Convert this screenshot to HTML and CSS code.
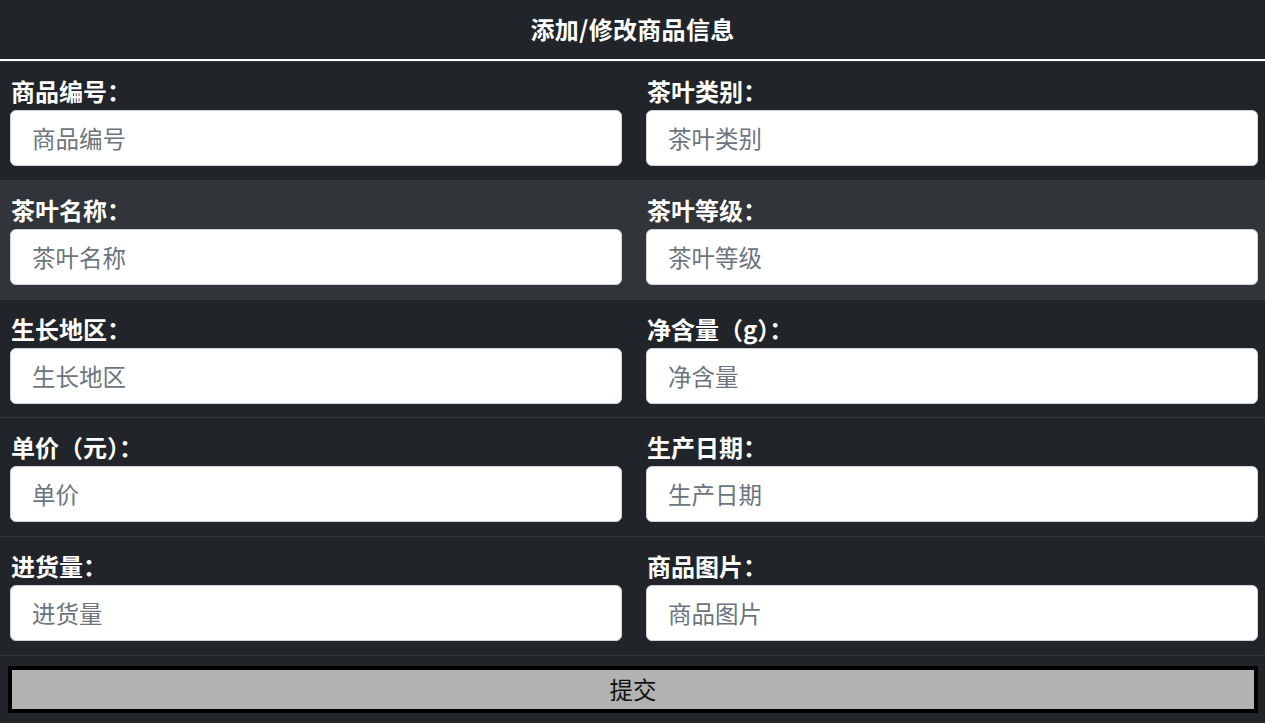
FILE: index.html
```html
<!DOCTYPE html>
<html lang="zh-CN">
<head>
<meta charset="utf-8">
<title>添加/修改商品信息</title>
<link rel="stylesheet" href="styles.css">
</head>
<body>
<div class="panel">
  <div class="panel-head">添加/修改商品信息</div>
  <div class="row">
    <div class="field"><label class="label">商品编号：</label><input class="input" type="text" placeholder="商品编号"></div>
    <div class="field"><label class="label">茶叶类别：</label><input class="input" type="text" placeholder="茶叶类别"></div>
  </div>
  <div class="row row-alt">
    <div class="field"><label class="label">茶叶名称：</label><input class="input" type="text" placeholder="茶叶名称"></div>
    <div class="field"><label class="label">茶叶等级：</label><input class="input" type="text" placeholder="茶叶等级"></div>
  </div>
  <div class="row">
    <div class="field"><label class="label">生长地区：</label><input class="input" type="text" placeholder="生长地区"></div>
    <div class="field"><label class="label">净含量（g）：</label><input class="input" type="text" placeholder="净含量"></div>
  </div>
  <div class="row">
    <div class="field"><label class="label">单价（元）：</label><input class="input" type="text" placeholder="单价"></div>
    <div class="field"><label class="label">生产日期：</label><input class="input" type="text" placeholder="生产日期"></div>
  </div>
  <div class="row">
    <div class="field"><label class="label">进货量：</label><input class="input" type="text" placeholder="进货量"></div>
    <div class="field"><label class="label">商品图片：</label><input class="input" type="text" placeholder="商品图片"></div>
  </div>
  <div class="submit-row">
    <button class="submit" type="button">提交</button>
  </div>
</div>
</body>
</html>
```
FILE: styles.css
```css
* { box-sizing: border-box; }
html, body {
  margin: 0;
  padding: 0;
  background: #212529;
  height: 100%;
}
body {
  font-family: "Noto Sans CJK SC", "Noto Sans", sans-serif;
  color: #fff;
  overflow: hidden;
}
.panel {
  display: flex;
  flex-direction: column;
  width: 1265px;
  height: 723px;
  background: #212529;
}
.panel-head {
  height: 61px;
  flex: none;
  border-bottom: 2px solid #ffffff;
  display: flex;
  align-items: center;
  justify-content: center;
  font-size: 24px;
  font-weight: 700;
  letter-spacing: 0.3px;
  padding-bottom: 3px;
}
.row {
  display: grid;
  grid-template-columns: 1fr 1fr;
  column-gap: 24px;
  padding: 14px 7px 12px 10px;
  border-top: 1px solid #34383c;
  height: 118.8px;
  flex: none;
}
.row-alt {
  background: #313438;
}
.field {
  display: flex;
  flex-direction: column;
  gap: 4px;
}
.label {
  font-size: 24px;
  font-weight: 700;
  line-height: 30px;
  height: 30px;
  color: #fff;
  padding-left: 1px;
}
.input {
  height: 56px;
  width: 100%;
  background: #fff;
  border: 1px solid #ced4da;
  border-radius: 6px;
  padding: 0 21px;
  font-family: "Noto Sans CJK SC", "Noto Sans", sans-serif;
  font-size: 23.5px;
  color: #495057;
  outline: none;
}
.input::placeholder {
  color: #6c757d;
  font-weight: 400;
}
.submit-row {
  border-top: 1px solid #34383c;
  padding: 10px 7px 0 8px;
  flex: none;
}
.submit {
  display: block;
  width: 100%;
  height: 47px;
  background: #b2b2b2;
  border: 4px solid #000;
  border-radius: 0;
  font-family: "Noto Sans CJK SC", "Noto Sans", sans-serif;
  font-size: 23.5px;
  color: #111;
  padding: 0;
  line-height: 1;
}
```
